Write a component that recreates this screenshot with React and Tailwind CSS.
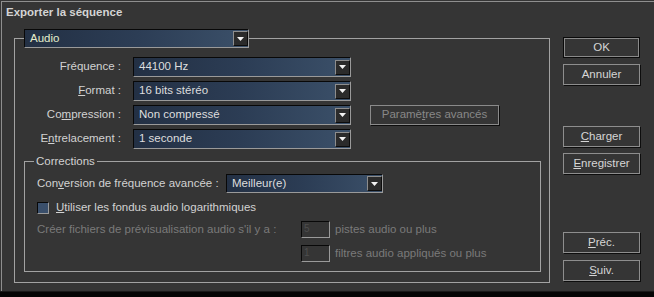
import React from 'react';

const sunken = 'border border-t-[#080808] border-l-[#080808] border-b-[#9a9a9a] border-r-[#9a9a9a]';

function Arrow() {
  return (
    <div className="w-[15px] h-[15px] bg-[#2b2b2b] border border-t-[#8d8d8d] border-l-[#8d8d8d] border-b-[#0c0c0c] border-r-[#0c0c0c] flex items-center justify-center shrink-0">
      <svg width="7" height="4" viewBox="0 0 7 4">
        <polygon points="0,0 7,0 3.5,4" fill="#f2f2f2" />
      </svg>
    </div>
  );
}

function Select({ value, className = '', textClass = 'text-[#dedede]' }) {
  return (
    <div className={`${sunken} flex items-center justify-between bg-gradient-to-r from-[#233044] via-[#2c3d55] to-[#3b5069] ${className}`}>
      <span className={`pl-[5px] leading-none whitespace-nowrap ${textClass}`}>{value}</span>
      <Arrow />
    </div>
  );
}

function Btn({ children, main, className = '' }) {
  return (
    <button
      className={`w-[77px] h-[21px] flex items-center justify-center bg-[#353535] text-[#d6d6d6] leading-none border ${
        main
          ? 'border-[#0a0a0a] shadow-[inset_0_0_0_1px_#8a8a8a]'
          : 'border-[#8e8e8e] shadow-[1px_1px_0_#0d0d0d]'
      } ${className}`}
    >
      {children}
    </button>
  );
}

const rows = [
  { label: <>Fréquence :</>, value: '44100 Hz' },
  { label: <><u>F</u>ormat :</>, value: '16 bits stéréo' },
  { label: <>Co<u>m</u>pression :</>, value: 'Non compressé', extra: true },
  { label: <>E<u>n</u>trelacement :</>, value: '1 seconde' },
];

export default function App() {
  return (
    <div className="w-[654px] h-[297px] bg-[#353535] overflow-hidden flex flex-col font-['Liberation_Sans',Arial,sans-serif] text-[11.5px] text-[#d2d2d2] whitespace-nowrap">
      <div className="h-[290px] ml-[1px] mt-[1px] border-l border-t border-[#8f8f8f] flex flex-col">
        <div className="h-[21px] pl-[4px] flex items-center font-bold text-[11.5px] text-[#d4d4d4]">
          Exporter la séquence
        </div>

        <div className="flex items-start">
          {/* Groupe principal */}
          <fieldset className="ml-[12px] mt-[6px] w-[536px] h-[254px] border border-[#a2a2a2] p-0 m-0 min-w-0">
            <legend className="ml-[9px] p-0">
              <Select value="Audio" className="w-[225px] h-[19px]" textClass="text-[#e4edcb]" />
            </legend>

            <div className="mt-[9px] flex flex-col gap-[4px]">
              {rows.map((r, i) => (
                <div key={i} className="flex items-center h-[20px]">
                  <div className="w-[106px] text-right">{r.label}</div>
                  <Select value={r.value} className="ml-[12px] w-[218px] h-[20px]" />
                  {r.extra && (
                    <div className="ml-[19px] w-[129px] h-[20px] border border-[#8a8a8a] shadow-[1px_1px_0_#0d0d0d] flex items-center justify-center text-[#888] leading-none">
                      Paramè<u>t</u>res avancés
                    </div>
                  )}
                </div>
              ))}
            </div>

            {/* Corrections */}
            <fieldset className="mt-[5px] ml-[9px] mr-[8px] border border-[#a2a2a2] p-0 pb-[9px] min-w-0">
              <legend className="ml-[9px] px-[2px] leading-[14px]">Corrections</legend>
              <div className="pl-[12px]">
                <div className="mt-[6px] flex items-center h-[19px]">
                  <div className="w-[181px]">Con<u>v</u>ersion de fréquence avancée :</div>
                  <Select value="Meilleur(e)" className="ml-[8px] w-[157px] h-[19px]" />
                </div>

                <div className="mt-[7px] flex items-center h-[16px]">
                  <div className={`w-[12px] h-[12px] ${sunken} bg-[#3a4f6b]`} />
                  <span className="ml-[7px]"><u>U</u>tiliser les fondus audio logarithmiques</span>
                </div>

                <div className="mt-[5px] flex items-start text-[#7a7a7a]">
                  <div className="w-[264px] h-[17px] flex items-center">Créer fichiers de prévisualisation audio s'il y a :</div>
                  <div className="flex flex-col gap-[7px]">
                    <div className="flex items-center h-[17px]">
                      <div className={`w-[29px] h-[17px] ${sunken} border-b-[#6a6a6a] border-r-[#6a6a6a] text-[#4e4e4e] text-[10px] leading-none pl-[2px] pt-[2px]`}>5</div>
                      <span className="ml-[5px]">pistes audio ou plus</span>
                    </div>
                    <div className="flex items-center h-[17px]">
                      <div className={`w-[29px] h-[17px] ${sunken} border-b-[#6a6a6a] border-r-[#6a6a6a] text-[#4e4e4e] text-[10px] leading-none pl-[2px] pt-[2px]`}>1</div>
                      <span className="ml-[5px]">filtres audio appliqués ou plus</span>
                    </div>
                  </div>
                </div>
              </div>
            </fieldset>
          </fieldset>

          {/* Boutons */}
          <div className="ml-[13px] mt-[14px] flex flex-col">
            <Btn main>OK</Btn>
            <Btn className="mt-[6px]">Annuler</Btn>
            <Btn className="mt-[41px]"><u>C</u>harger</Btn>
            <Btn className="mt-[6px]"><u>E</u>nregistrer</Btn>
            <Btn className="mt-[58px]"><u>P</u>réc.</Btn>
            <Btn className="mt-[7px]"><u>S</u>uiv.</Btn>
          </div>
        </div>
      </div>
      <div className="flex-1 bg-[#050505] border-t border-[#1a1a1a]" />
    </div>
  );
}
